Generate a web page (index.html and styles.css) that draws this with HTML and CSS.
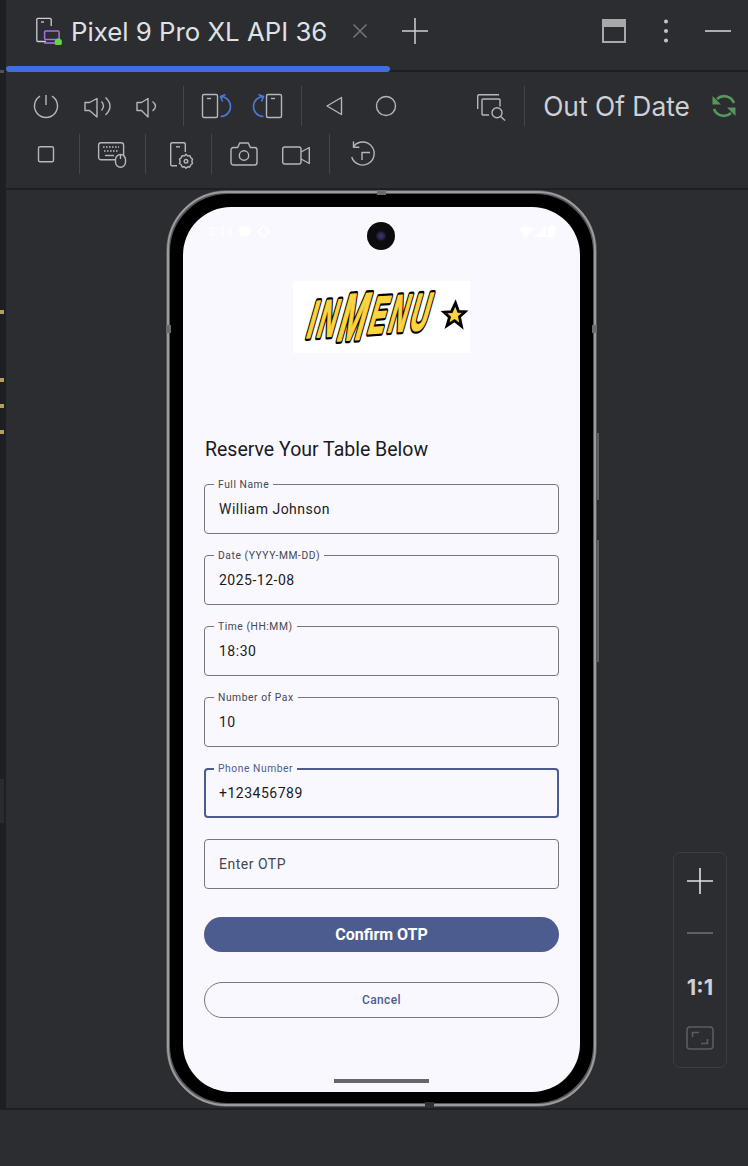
FILE: index.html
```html
<!DOCTYPE html>
<html lang="en">

<head>
    <meta charset="UTF-8">
    <meta name="viewport" content="width=device-width, initial-scale=1.0">
    <title>Running Devices</title>
    <link rel="stylesheet" href="styles.css">
</head>

<body>
    <div class="window">
        <div class="gutter">
            <div class="mark mark-grey"></div>
            <div class="mark mark-a"></div>
            <div class="mark mark-b"></div>
            <div class="mark mark-c"></div>
            <div class="mark mark-c"></div>
            <div class="mark mark-thumb"></div>
        </div>

        <div class="main">
            <div class="tabs">
                <svg width="26" height="28" viewBox="0 0 26 28">
                    <path d="M10 24.500H2a1.200 1.200 0 0 1-1.200-1.200V2.500A1.200 1.200 0 0 1 2 1.300h12a1.200 1.200 0 0 1 1.200 1.200V9" fill="none" stroke="#ced0d6" stroke-width="1.300" />
                    <path d="M5 5h3" stroke="#ced0d6" stroke-width="1.300" />
                    <rect x="8.600" y="14" width="14.500" height="8.400" rx="1" fill="#2b2d30" stroke="#a571e6" stroke-width="1.500" />
                    <path d="M8 26h13" stroke="#a571e6" stroke-width="1.600" />
                    <circle cx="22.300" cy="25.300" r="3.700" fill="#5fd93a" />
                </svg>
                <span class="tab-title">Pixel 9 Pro XL API 36</span>
                <svg class="tab-close" width="16" height="16" viewBox="0 0 16 16">
                    <path d="M1.500 1.500l13 13M14.500 1.500l-13 13" stroke="#6f737a" stroke-width="1.600" />
                </svg>
                <svg class="tab-plus" width="26" height="26" viewBox="0 0 26 26">
                    <path d="M13 0v26M0 13h26" stroke="#ced0d6" stroke-width="1.500" />
                </svg>
                <div class="tab-actions">
                    <svg width="24" height="24" viewBox="0 0 24 24">
                        <rect x="1" y="1" width="22" height="22" fill="none" stroke="#a8a9ab" stroke-width="2" />
                        <rect x="1" y="1" width="22" height="7" fill="#a8a9ab" />
                    </svg>
                    <svg class="dots" width="6" height="26" viewBox="0 0 6 26">
                        <circle cx="3" cy="3.500" r="2" fill="#c4c6cb" />
                        <circle cx="3" cy="13" r="2" fill="#c4c6cb" />
                        <circle cx="3" cy="22.500" r="2" fill="#c4c6cb" />
                    </svg>
                    <svg width="26" height="4" viewBox="0 0 26 4">
                        <path d="M0 2h26" stroke="#ced0d6" stroke-width="1.600" />
                    </svg>
                </div>
            </div>
            <div class="tab-line">
                <div class="tab-indicator"></div>
            </div>

            <div class="toolbar">
                <div class="tool-row">
                    <div class="group">
                        <svg class="tool" viewBox="0 0 28 28">
                            <path d="M8 4.200a11.500 11.500 0 1 0 12 0M14 3v10" />
                        </svg>
                        <svg class="tool" viewBox="0 0 28 28">
                            <path d="M1 10.500h4.500L13 6.500V25l-7.500-6.500H1zM17.500 9.500q4 4.500 0 9M21.500 5.500q9 8.500 0 17.500" />
                        </svg>
                        <svg class="tool" viewBox="0 0 28 28">
                            <path d="M1 10.500h4.500L12 6.500V25l-6.500-6.500H1zM16.500 9.500q6 4.500 0 9.500" />
                        </svg>
                    </div>
                    <div class="sep"></div>
                    <div class="group">
                        <svg class="tool" viewBox="0 0 28 28">
                            <rect x="0.500" y="2.500" width="15" height="23" rx="1.500" />
                            <path d="M5 6.500h4" />
                            <path class="blue" d="M18.500 4.500a10 10 0 0 1 0 20M20.500 9.500L18.500 4.500l5-2" />
                        </svg>
                        <svg class="tool" viewBox="0 0 28 28">
                            <rect x="12.500" y="2.500" width="15" height="23" rx="1.500" />
                            <path d="M17 6.500h4" />
                            <path class="blue" d="M9.500 4.500a10 10 0 0 0 0 20M7.500 9.500L9.500 4.500l-5-2" />
                        </svg>
                    </div>
                    <div class="sep"></div>
                    <div class="group">
                        <svg class="tool" viewBox="0 0 28 28">
                            <path d="M21.500 5.500L7 14l14.500 8.500z" />
                        </svg>
                        <svg class="tool" viewBox="0 0 28 28">
                            <circle cx="14" cy="14" r="9.500" />
                        </svg>
                    </div>
                    <div class="tool-end">
                        <svg class="tool" viewBox="0 0 28 28">
                            <path d="M.700 17V4a1.300 1.300 0 0 1 1.300-1.300H22M5 23V8a1 1 0 0 1 1-1h16a1 1 0 0 1 1 1v6.500M5 23h7" />
                            <circle cx="20" cy="20.700" r="5" />
                            <path d="M23.700 24.400L28 28.500" />
                        </svg>
                        <div class="sep"></div>
                        <span class="out-of-date">Out Of Date</span>
                        <svg class="sync" width="24" height="24" viewBox="0 0 24 24">
                            <path d="M22 9A10.500 10.500 0 0 0 5 5M2 15a10.500 10.500 0 0 0 17 4" fill="none" stroke="#57965c" stroke-width="2.600" />
                            <path d="M.500 2v8.500H9zM23.500 22v-8.500H15z" fill="#57965c" />
                        </svg>
                    </div>
                </div>
                <div class="tool-row">
                    <svg class="tool" viewBox="0 0 28 28">
                        <rect x="6.500" y="6.800" width="15" height="15" rx="1.500" />
                    </svg>
                    <div class="sep"></div>
                    <svg class="tool" viewBox="0 0 28 28">
                        <rect x="0.600" y="2.800" width="25" height="17" rx="2.500" />
                        <path class="keys" d="M5 7h16M6 11h15" />
                        <path d="M7 15.500h9" />
                        <rect class="solid" x="17.500" y="14.500" width="10" height="12.700" rx="5" />
                        <path d="M22.500 15v4" />
                    </svg>
                    <div class="sep"></div>
                    <svg class="tool" viewBox="0 0 28 28">
                        <path d="M13 25.700H8a1.300 1.300 0 0 1-1.300-1.300V4A1.300 1.300 0 0 1 8 2.700h12A1.300 1.300 0 0 1 21.300 4v8" />
                        <path d="M12 6.800h4" />
                        <path class="solid" d="M22 14.300l1.600 1.600 2.200-.3 1 2.200 1.700 1.300-.6 2.200.6 2.200-1.700 1.300-1 2.200-2.200-.3L22 28.300l-1.600-1.600-2.200.3-1-2.200-1.700-1.300.6-2.200-.6-2.200 1.700-1.300 1-2.200 2.200.3z" />
                        <circle cx="22" cy="21.300" r="1.800" />
                    </svg>
                    <div class="sep"></div>
                    <div class="group">
                        <svg class="tool" viewBox="0 0 28 28">
                            <path d="M3.500 7.500h4.200l2-4.500h8.600l2 4.500h4.200A2.500 2.500 0 0 1 27 10v12.500a2.500 2.500 0 0 1-2.500 2.500h-21A2.500 2.500 0 0 1 1 22.500V10a2.500 2.500 0 0 1 2.500-2.500z" />
                            <circle cx="14" cy="15.500" r="4.700" />
                        </svg>
                        <svg class="tool" viewBox="0 0 28 28">
                            <rect x="0.700" y="7" width="18.300" height="17" rx="2" />
                            <path d="M19 12l8.300-4.500V23.500L19 19" />
                        </svg>
                    </div>
                    <div class="sep"></div>
                    <svg class="tool" viewBox="0 0 28 28">
                        <path d="M6 6a11.500 11.500 0 1 1-2.300 11M5.500 1.500v5.800h5.800M14 20v-7.500h8" />
                    </svg>
                </div>
            </div>

            <div class="stage">
                <div class="phone">
                    <div class="notch notch-top"></div>
                    <div class="notch notch-bottom"></div>
                    <div class="notch notch-left"></div>
                    <div class="notch notch-right"></div>
                    <div class="side-key side-key-power"></div>
                    <div class="side-key side-key-volume"></div>

                    <div class="screen">
                        <div class="camera">
                            <div class="lens"></div>
                        </div>
                        <div class="status">
                            <div class="status-left">
                                <span>3:14</span>
                                <svg width="12" height="11" viewBox="0 0 12 11">
                                    <path d="M6 0c3.300 0 6 2 6 4.700S9.300 9.400 6 9.400H4.500L2 11V8.500C.700 7.700 0 6.300 0 4.700 0 2 2.700 0 6 0z" fill="#fff" />
                                </svg>
                                <svg width="13" height="13" viewBox="0 0 13 13">
                                    <path d="M6.500.700l5.800 5.800-5.800 5.800L.700 6.500z" fill="none" stroke="#fff" stroke-width="1.500" />
                                </svg>
                            </div>
                            <div class="status-right">
                                <svg width="14" height="11" viewBox="0 0 14 11">
                                    <path d="M0 3.300a10 10 0 0 1 14 0L7 11z" fill="#fff" />
                                </svg>
                                <svg width="11" height="11" viewBox="0 0 11 11">
                                    <path d="M11 0v11H0z" fill="#fff" />
                                </svg>
                                <svg width="7" height="12" viewBox="0 0 7 12">
                                    <path d="M2 0h3v1h2v11H0V1h2z" fill="#fff" />
                                </svg>
                            </div>
                        </div>

                        <div class="logo">
                            <svg width="177" height="72" viewBox="0 0 177 72">
                                <!-- black outline is a clone of the word, yellow word on top -->
                                <use class="logo-outline" href="#logoWord" />
                                <g class="logo-fill">
                                    <text id="logoWord" class="logo-word" transform="translate(13 57) rotate(-4) skewX(-15) scale(.48 1)">IN<tspan class="logo-m" dy="5">M</tspan><tspan dy="-5">ENU</tspan></text>
                                </g>
                                <path d="M162.500 22l3 8.500 6.500.2-5.500 5 2 9.500-7-5.500-7.500 5 2.500-8.500-5.500-5 7.500-.5z" fill="#fbd440" stroke="#000" stroke-width="2.800" />
                            </svg>
                        </div>

                        <div class="form">
                            <h1>Reserve Your Table Below</h1>

                            <div class="field">
                                <span class="legend">Full Name</span>
                                <span class="value">William Johnson</span>
                            </div>
                            <div class="field">
                                <span class="legend">Date (YYYY-MM-DD)</span>
                                <span class="value">2025-12-08</span>
                            </div>
                            <div class="field">
                                <span class="legend">Time (HH:MM)</span>
                                <span class="value">18:30</span>
                            </div>
                            <div class="field">
                                <span class="legend">Number of Pax</span>
                                <span class="value">10</span>
                            </div>
                            <div class="field focused">
                                <span class="legend">Phone Number</span>
                                <span class="value">+123456789</span>
                            </div>
                            <div class="field">
                                <span class="value empty">Enter OTP</span>
                            </div>

                            <button class="btn-confirm">Confirm OTP</button>
                            <button class="btn-cancel">Cancel</button>
                        </div>

                        <div class="home-bar"></div>
                    </div>
                </div>

                <div class="zoom-panel">
                    <svg width="26" height="26" viewBox="0 0 26 26">
                        <path d="M13 0v26M0 13h26" stroke="#dfe1e5" stroke-width="1.600" />
                    </svg>
                    <svg class="zoom-out" width="26" height="2" viewBox="0 0 26 2">
                        <path d="M0 1h26" stroke="#6f737a" stroke-width="1.500" />
                    </svg>
                    <span class="zoom-ratio">1:1</span>
                    <svg width="28" height="24" viewBox="0 0 28 24">
                        <rect x="1" y="1" width="26" height="22" rx="3" fill="none" stroke="#5a5d63" stroke-width="1.600" />
                        <path d="M6.500 11V6.500H13M21.500 13v4.500H15" fill="none" stroke="#5a5d63" stroke-width="1.600" />
                    </svg>
                </div>
            </div>
        </div>
    </div>

    <div class="footer"></div>
</body>

</html>
```

FILE: styles.css
```css
body {
    margin: 0;
    height: 1166px;
    overflow: hidden;
    display: flex;
    flex-direction: column;
    background: #2b2d30;
    font-family: Inter, sans-serif;
}

.window {
    height: 1108px;
    flex: none;
    display: flex;
}

.footer {
    flex: 1;
    border-top: 2px solid #1e1f22;
}

.gutter {
    width: 6px;
    flex: none;
    background: #1e1f22;
}

.mark {
    width: 4px;
    height: 4px;
    background: #b89d5c;
}

.mark-grey {
    height: 3px;
    margin-top: 70px;
    background: #4e5157;
}

.mark-a {
    margin-top: 237px;
}

.mark-b {
    margin-top: 64px;
}

.mark-c {
    margin-top: 22px;
}

.mark-thumb {
    height: 44px;
    margin-top: 345px;
    background: #2a2b2f;
}

.main {
    flex: 1;
    min-width: 0;
    display: flex;
    flex-direction: column;
}

/* top tab strip */
.tabs {
    height: 66px;
    flex: none;
    display: flex;
    align-items: center;
    padding: 0 17px 4px 30px;
    box-sizing: border-box;
}

.tab-title {
    margin-left: 9px;
    font-size: 25.8px;
    color: #dfe1e5;
    white-space: nowrap;
}

.tab-close {
    margin-left: 25px;
}

.tab-plus {
    margin-left: 34px;
}

.tab-actions {
    margin-left: auto;
    display: flex;
    align-items: center;
}

.dots {
    margin: 0 36px 0 37px;
}

.tab-line {
    height: 6px;
    flex: none;
    background: linear-gradient(#2b2d30 4px, #1e1f22 4px);
}

.tab-indicator {
    width: 384px;
    height: 6px;
    border-radius: 3px;
    background: #3d6fe0;
}

/* emulator toolbar */
.toolbar {
    height: 118px;
    flex: none;
    padding: 10px 12px 10px 26px;
    box-sizing: border-box;
    border-bottom: 2px solid #1e1f22;
}

.tool-row {
    height: 48px;
    display: flex;
    align-items: center;
}

.group {
    display: flex;
    gap: 24px;
}

.sep {
    width: 1px;
    height: 40px;
    margin: 0 18px 0 19px;
    background: #43454a;
}

.tool {
    width: 28px;
    height: 28px;
    flex: none;
    overflow: visible;
    fill: none;
    stroke: #b4b7bc;
    stroke-width: 1.4;
    stroke-linejoin: round;
}

.tool .blue {
    stroke: #4d78d8;
    stroke-width: 1.6;
}

.tool .solid {
    fill: #2b2d30;
}

.tool .keys {
    stroke-dasharray: 1.6 1.4;
}

.tool-end {
    margin-left: auto;
    display: flex;
    align-items: center;
}

.out-of-date {
    font-size: 26.4px;
    color: #ced0d6;
    white-space: nowrap;
}

.sync {
    margin-left: 22px;
}

/* device */
.stage {
    flex: 1;
    position: relative;
    display: flex;
    justify-content: center;
    align-items: flex-start;
    padding-left: 9px;
}

.phone {
    position: relative;
    width: 431px;
    height: 917px;
    box-sizing: border-box;
    padding: 13px 13px 11px;
    border: 4px solid #55565a;
    border-radius: 62px;
    background: #000;
}

.phone::before {
    content: "";
    position: absolute;
    inset: -3px;
    border: 2px solid #9a9b9d;
    border-radius: 59px;
}

.notch {
    position: absolute;
    background: #6b6c6e;
}

.notch-top {
    top: -4px;
    left: 207px;
    width: 9px;
    height: 5px;
}

.notch-bottom {
    bottom: -4px;
    left: 255px;
    width: 9px;
    height: 5px;
    background: #2f3033;
}

.notch-left {
    left: -4px;
    top: 131px;
    width: 5px;
    height: 8px;
}

.notch-right {
    right: -4px;
    top: 131px;
    width: 5px;
    height: 8px;
}

.side-key {
    position: absolute;
    right: -6px;
    width: 2px;
    background: #5f6063;
}

.side-key-power {
    top: 239px;
    height: 67px;
}

.side-key-volume {
    top: 346px;
    height: 122px;
}

.screen {
    position: relative;
    height: 100%;
    border-radius: 48px;
    background: #faf8ff;
    display: flex;
    flex-direction: column;
    overflow: hidden;
    font-family: Roboto, sans-serif;
}

.camera {
    position: absolute;
    top: 15px;
    left: 184px;
    width: 28px;
    height: 28px;
    border-radius: 50%;
    background: #0c0c0e;
    display: flex;
    align-items: center;
    justify-content: center;
}

.lens {
    width: 10px;
    height: 10px;
    border-radius: 50%;
    background: radial-gradient(#3a3068 20%, #15141c 75%);
}

.status {
    height: 48px;
    flex: none;
    padding: 0 25px;
    display: flex;
    align-items: center;
    justify-content: space-between;
    color: #fff;
    font-size: 13px;
}

.status-left,
.status-right {
    display: flex;
    align-items: center;
}

.status-left {
    gap: 6px;
}

.status-right {
    gap: 2px;
}

.logo {
    width: 177px;
    height: 72px;
    flex: none;
    margin: 26px auto 0;
    background: #fff;
}

.logo svg {
    display: block;
    overflow: visible;
}

.logo-word {
    font-family: "Liberation Sans", sans-serif;
    font-style: italic;
    font-weight: 700;
    font-size: 52px;
    letter-spacing: 7px;
    stroke-linejoin: round;
}

.logo-m {
    font-size: 66px;
}

.logo-outline {
    fill: #000;
    stroke: #000;
    stroke-width: 6px;
}

.logo-fill {
    fill: #fbd440;
    stroke: #fbd440;
    stroke-width: 1.5px;
}

.form {
    padding: 0 21px;
}

h1 {
    margin: 83px 0 20px;
    padding-left: 1px;
    font-size: 19.5px;
    line-height: 28px;
    font-weight: 400;
    color: #1a1b20;
}

.field {
    position: relative;
    height: 50px;
    box-sizing: border-box;
    margin-bottom: 21px;
    padding: 0 14px;
    display: flex;
    align-items: center;
    border: 1px solid #75777f;
    border-radius: 4px;
}

.legend {
    position: absolute;
    top: -6px;
    left: 9px;
    padding: 0 4px;
    background: #faf8ff;
    font-size: 10.3px;
    line-height: 12px;
    letter-spacing: 0.55px;
    color: #44464f;
}

.value {
    font-size: 14px;
    letter-spacing: 0.5px;
    color: #1a1b20;
}

.value.empty {
    color: #44464f;
}

.field.focused {
    border: 2px solid #4d5c8e;
    padding: 0 13px;
}

.field.focused .legend {
    top: -7px;
    left: 8px;
    color: #4d5c8e;
}

button {
    display: block;
    width: 100%;
    border-radius: 18px;
    font-family: Roboto, sans-serif;
    cursor: pointer;
}

.btn-confirm {
    height: 35px;
    margin-top: 28px;
    border: none;
    background: #4d5c8e;
    color: #fff;
    font-size: 16px;
    font-weight: 700;
}

.btn-cancel {
    height: 36px;
    margin-top: 30px;
    border: 1px solid #75777f;
    background: transparent;
    color: #4d5c8e;
    font-size: 12px;
    font-weight: 500;
    letter-spacing: 0.4px;
}

.home-bar {
    width: 95px;
    height: 4px;
    flex: none;
    margin: auto auto 9px;
    background: #66646c;
}

/* zoom controls floating over the canvas */
.zoom-panel {
    position: absolute;
    top: 662px;
    right: 21px;
    width: 54px;
    height: 216px;
    box-sizing: border-box;
    padding-top: 14.5px;
    border: 1.5px solid #3c3e40;
    border-radius: 7px;
    display: flex;
    flex-direction: column;
    align-items: center;
}

.zoom-out {
    margin: 38px 0 40px;
}

.zoom-ratio {
    height: 26px;
    margin-bottom: 26px;
    font-size: 22px;
    line-height: 26px;
    font-weight: 700;
    color: #ced0d6;
}
```
